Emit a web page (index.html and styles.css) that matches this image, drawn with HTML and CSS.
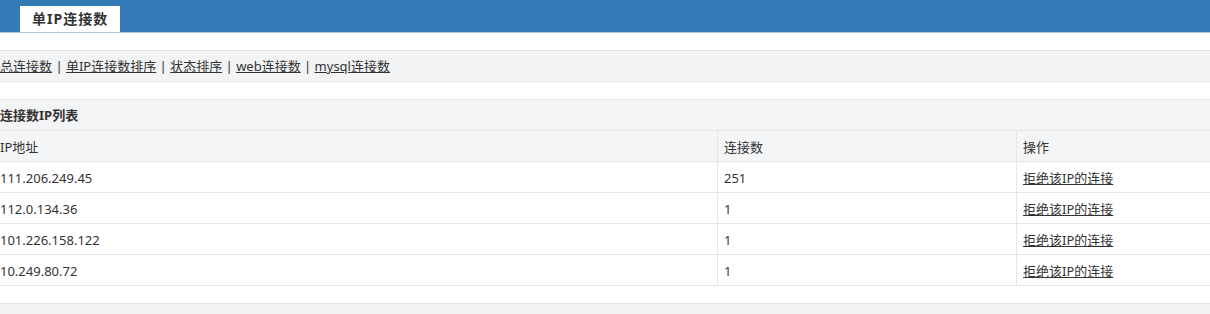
FILE: index.html
```html
<!DOCTYPE html>
<html lang="zh-CN">
<head>
  <meta charset="UTF-8" />
  <title>单IP连接数</title>
  <link rel="stylesheet" href="styles.css">
</head>
<body>
  <div class="topbar">
    <div class="tab">单IP连接数</div>
  </div>

  <div class="links">
    <a href="#">总连接数</a> | <a href="#">单IP连接数排序</a> | <a href="#">状态排序</a> | <a href="#">web连接数</a> | <a href="#">mysql连接数</a>
  </div>

  <div class="panel">
    <div class="panel-title">连接数IP列表</div>
    <table class="list">
      <tr class="head">
        <td class="c1">IP地址</td>
        <td class="c2">连接数</td>
        <td class="c3">操作</td>
      </tr>
      <tr>
        <td class="c1">111.206.249.45</td>
        <td class="c2">251</td>
        <td class="c3"><a href="#">拒绝该IP的连接</a></td>
      </tr>
      <tr>
        <td class="c1">112.0.134.36</td>
        <td class="c2">1</td>
        <td class="c3"><a href="#">拒绝该IP的连接</a></td>
      </tr>
      <tr>
        <td class="c1">101.226.158.122</td>
        <td class="c2">1</td>
        <td class="c3"><a href="#">拒绝该IP的连接</a></td>
      </tr>
      <tr>
        <td class="c1">10.249.80.72</td>
        <td class="c2">1</td>
        <td class="c3"><a href="#">拒绝该IP的连接</a></td>
      </tr>
    </table>
  </div>

  <div class="footer"></div>
</body>
</html>
```

FILE: styles.css
```css
body {
  margin: 0;
  font-family: "Noto Sans", "Noto Sans CJK SC", sans-serif;
  font-size: 13px;
  color: #333;
  background: #fff;
}
a {
  color: #333;
  text-decoration: underline;
}
.topbar {
  height: 32px;
  background-color: #337ab7;
  border-bottom: 1px solid #a9cbe6;
  padding-left: 20px;
  display: flex;
  align-items: flex-end;
}
.tab {
  background: #fff;
  height: 26px;
  line-height: 26px;
  padding: 0 12px;
  font-size: 14px;
  font-weight: bold;
  letter-spacing: 1px;
  color: #333;
}
.links {
  margin-top: 17px;
  height: 30px;
  line-height: 31px;
  background: #f2f3f5;
  border-top: 1px solid #dfe1e4;
  border-bottom: 1px solid #e6e7e9;
}
.panel {
  margin-top: 17px;
}
.panel-title {
  height: 30px;
  line-height: 31px;
  background: #f3f4f6;
  border-top: 1px solid #e3e4e6;
  border-bottom: 1px solid #e3e4e6;
  font-weight: bold;
}
.list {
  width: 100%;
  border-collapse: collapse;
}
.list td {
  height: 29px;
  padding: 1px 6px 0;
  border-bottom: 1px solid #e5e6e8;
  border-left: 1px solid #e5e6e8;
}
.list td.c1 {
  width: 711px;
  padding-left: 0;
  border-left: none;
}
.list td.c2 {
  width: 286px;
}
.list tr.head td {
  background: #f4f5f7;
}
.footer {
  margin-top: 17px;
  height: 12px;
  background: #f2f3f5;
  border-top: 1px solid #e3e4e6;
}
```
